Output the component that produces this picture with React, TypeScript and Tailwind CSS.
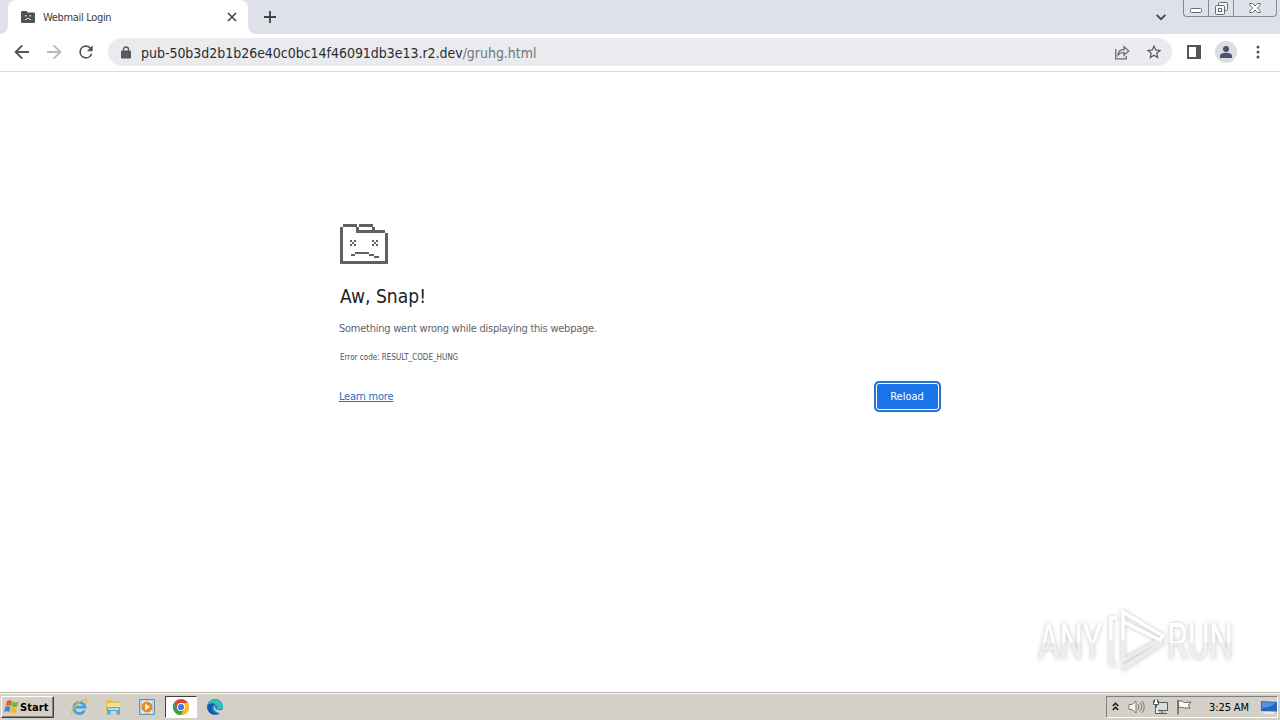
import React from 'react';

function SadFolder() {
  return (
    <svg width="48" height="40" viewBox="0 0 48 40" shapeRendering="crispEdges" fill="#5f6063">
      <path d="M3 0h14v3H3zM19 0h14v3H19zM0 3h3v37H0zM16 3h3v3h-3zM32 3h3v3h-3zM16 6h29v3H16zM45 9h3v31h-3zM3 37h42v3H3z" />
      <path d="M10 16h2v2h-2zM14 16h2v2h-2zM12 18h2v2h-2zM10 20h2v2h-2zM14 20h2v2h-2zM32 16h2v2h-2zM36 16h2v2h-2zM34 18h2v2h-2zM32 20h2v2h-2zM36 20h2v2h-2z" />
      <path d="M11 30h4v2h-4zM15 28h14v2H15zM29 30h5v2h-5zM34 32h5v2h-5z" />
    </svg>
  );
}

function TabStrip() {
  return (
    <div className="flex h-[34px] bg-[#dee1e8]">
      <div className="h-full w-2 bg-white">
        <div className="h-full rounded-br-lg bg-[#dee1e8]" />
      </div>
      <div className="flex w-[240px] items-center rounded-t-lg bg-white pl-[13px] pr-[11px]">
        <svg width="14" height="12" viewBox="0 0 14 12" className="shrink-0">
          <path d="M1 0h4.5L7 1.5h6q1 0 1 1V11q0 1-1 1H1q-1 0-1-1V1q0-1 1-1z" fill="#505458" />
          <path d="M4 4h1.5v1.5H4zM8.500 4H10v1.500H8.500zM4 9V8h1.500V7h3v1H10v1H8.500V8h-3v1z" fill="#e3e4e5" />
        </svg>
        <span className="ml-[8px] mt-px whitespace-nowrap text-[11px] leading-[14px] tracking-[-0.33px] text-[#3c4043]">Webmail Login</span>
        <svg width="10" height="10" viewBox="0 0 10 10" className="ml-auto shrink-0" stroke="#45484c" strokeWidth="1.700">
          <path d="M1 1l8 8M9 1L1 9" />
        </svg>
      </div>
      <div className="h-full w-2 bg-white">
        <div className="h-full rounded-bl-lg bg-[#dee1e8]" />
      </div>
      <svg width="12" height="12" viewBox="0 0 12 12" className="ml-2 mt-[11px]" stroke="#3f4246" strokeWidth="1.800">
        <path d="M6 0v12M0 6h12" />
      </svg>
      <svg width="10" height="7" viewBox="0 0 10 7" className="ml-auto mr-[17px] mt-[14px]" fill="none" stroke="#45484d" strokeWidth="1.800">
        <path d="M.6 .8L5 5.200 9.400 .8" />
      </svg>
      <div className="mr-[3px] flex h-[17px] w-[94px] rounded-b border border-t-0 border-[#858a95] bg-[#dfe2e8] text-[#666b77]">
        <div className="flex w-[25px] justify-center border-r border-[#858a95] pt-[8px]">
          <svg width="12" height="5" viewBox="0 0 12 5">
            <rect x=".5" y=".5" width="11" height="4" rx="1" fill="#fff" stroke="currentColor" />
          </svg>
        </div>
        <div className="flex w-[25px] justify-center border-r border-[#858a95] pt-[2px]">
          <svg width="13" height="13" viewBox="0 0 13 13" fill="#f4f5f7" stroke="currentColor">
            <rect x="3.5" y=".5" width="9" height="8" rx="1" />
            <rect x=".5" y="3.5" width="9" height="9" rx="1" />
            <rect x="3.5" y="6.5" width="3" height="3" />
          </svg>
        </div>
        <div className="flex flex-1 justify-center pt-[3px]">
          <svg width="12" height="10" viewBox="0 0 12 10" fill="#fff" stroke="currentColor">
            <path d="M.7.5h3L6 3 8.300.5h3v1.500L8.300 5l3 3v1.500h-3L6 7 3.700 9.500h-3V8l3-3-3-3z" />
          </svg>
        </div>
      </div>
    </div>
  );
}

function Toolbar() {
  return (
    <div className="flex h-[38px] items-center border-b border-[#dadce0] bg-white pb-px">
      <svg width="16" height="16" viewBox="0 0 16 16" className="ml-[14px]" fill="none" stroke="#53565a" strokeWidth="1.900">
        <path d="M15 8H2M8.300 1.300L1.600 8l6.700 6.700" />
      </svg>
      <svg width="16" height="16" viewBox="0 0 16 16" className="ml-4" fill="none" stroke="#b7b9bc" strokeWidth="1.900">
        <path d="M1 8h13M7.700 1.300L14.400 8l-6.700 6.700" />
      </svg>
      <svg width="20" height="20" viewBox="0 0 24 24" className="ml-[14px]" fill="#505357">
        <path d="M17.650 6.350A7.960 7.960 0 0 0 12 4a8 8 0 1 0 7.730 10h-2.080A6 6 0 1 1 12 6c1.660 0 3.140.69 4.220 1.780L13 11h7V4z" />
      </svg>
      <div className="ml-3 flex h-7 w-[1064px] items-center rounded-full bg-[#e9ebee] pl-[13px] pr-[9px]">
        <svg width="10" height="13" viewBox="0 0 10 13" className="shrink-0">
          <path d="M2.500 5V3.500a2.500 2.500 0 0 1 5 0V5" fill="none" stroke="#56595d" strokeWidth="1.400" />
          <rect y="4.500" width="10" height="8" rx="1" fill="#56595d" />
        </svg>
        <div className="ml-[10px] mt-px whitespace-nowrap text-[14px] leading-5 tracking-[-0.03px] text-[#2b2e31]">
          pub-50b3d2b1b26e40c0bc14f46091db3e13.r2.dev<span className="text-[#73777b]">/gruhg.html</span>
        </div>
        <svg width="16" height="15" viewBox="0 0 16 15" className="ml-auto shrink-0" fill="none" stroke="#696d72" strokeWidth="1.300">
          <path d="M1.700 4v9.800h10.600V11" />
          <path d="M4 10c.3-3.700 2.300-5.500 6-5.500V1.700l4.700 4.300L10 10.200V7.300C7.400 7.300 5.500 8.200 4 10z" />
        </svg>
        <svg width="18" height="18" viewBox="0 0 24 24" className="ml-[15px] shrink-0" fill="#555a60">
          <path d="M22 9.240l-7.190-.62L12 2 9.190 8.630 2 9.240l5.460 4.730L5.820 21 12 17.270 18.180 21l-1.630-7.030zM12 15.400l-3.760 2.270 1-4.280-3.320-2.880 4.380-.38L12 6.100l1.710 4.040 4.380.38-3.320 2.880 1 4.280z" />
        </svg>
      </div>
      <svg width="14" height="14" viewBox="0 0 14 14" className="ml-[15px]">
        <path d="M1 1h12v12H1z" fill="#fff" stroke="#515458" strokeWidth="2" />
        <path d="M9 0h5v14H9z" fill="#515458" />
      </svg>
      <div className="ml-[14px] flex h-[22px] w-[22px] items-center justify-center rounded-full bg-[#dadde2]">
        <svg width="12" height="12" viewBox="0 0 12 12" fill="#4a526b">
          <circle cx="6" cy="3" r="3" />
          <path d="M0 12v-2c0-2 3-3.200 6-3.200S12 8 12 10v2z" />
        </svg>
      </div>
      <svg width="4" height="14" viewBox="0 0 4 14" className="ml-[19px]" fill="#505357">
        <circle cx="2" cy="2" r="1.500" />
        <circle cx="2" cy="7" r="1.500" />
        <circle cx="2" cy="12" r="1.500" />
      </svg>
    </div>
  );
}

function Watermark() {
  return (
    <div className="absolute bottom-[18px] right-[36px] drop-shadow-[0_0_2px_rgba(0,0,0,0.24)]">
      <svg width="208" height="66" viewBox="0 0 208 66">
        <defs>
          <linearGradient id="fade" x1="0" y1="0" x2="0" y2="1">
            <stop offset="0.5" stopColor="#ffffff" />
            <stop offset="0.52" stopColor="#efefef" />
          </linearGradient>
        </defs>
        <g fill="url(#fade)" fontFamily="Roboto" fontSize="50">
          <text transform="translate(2 51) scale(.66 1)">ANY</text>
          <text transform="translate(131 51) scale(.67 1)">RUN</text>
        </g>
        <g fill="none" strokeWidth="3.500">
          <path d="M86 61l41-27" stroke="#ebebeb" strokeWidth="5" />
          <path d="M88 52l35-20" stroke="#ebebeb" />
          <path d="M75 32v25h5M87 32v22" stroke="#efefef" />
          <path d="M81 10h-6v22M87 32V4l40 24-3 4L88 14" stroke="#fff" />
        </g>
      </svg>
    </div>
  );
}

function ErrorPage() {
  return (
    <main className="relative flex-1 bg-white pt-[152px]">
      <div className="mx-auto w-[600px]">
        <SadFolder />
        <h1 className="mt-[20px] text-[19px] leading-6 tracking-[0.05px] text-[#202124]">Aw, Snap!</h1>
        <p className="-ml-px mt-[13px] text-[11px] leading-[15px] tracking-[-0.24px] text-[#5f6368]">Something went wrong while displaying this webpage.</p>
        <p className="mt-[16px] text-[8px] leading-[11px] text-[#505357]">Error code: RESULT_CODE_HUNG</p>
        <div className="mt-[20px] flex items-center justify-between">
          <a className="-ml-px -mt-px text-[11px] leading-[15px] tracking-[-0.2px] text-[#256fc5] underline">Learn more</a>
          <button className="mr-px h-[27px] w-[63px] rounded-[3px] border border-white bg-[#1a73e8] pr-px text-[11px] leading-[14px] text-white ring-2 ring-[#2b70ca]">Reload</button>
        </div>
      </div>
      <Watermark />
    </main>
  );
}

function Taskbar() {
  return (
    <footer className="flex h-[28px] shrink-0 items-center border-t border-[#b9b5ab] bg-[#d4d0c8] pt-px shadow-[inset_0_1px_0_#fff]">
      <div className="ml-px flex h-[22px] w-[53px] items-center border border-b-[#404040] border-l-white border-r-[#404040] border-t-white pl-[2px] shadow-[inset_-1px_-1px_0_#808080]">
        <svg width="16" height="16" viewBox="0 0 16 16" className="shrink-0">
          <path d="M3 2q3-1.500 5 .2L6.800 7Q4.500 5.600 1.700 6.800z" fill="#e75b22" />
          <path d="M8.700 2.600q3 1.700 6 .1L13.200 7.500q-3 1.400-5.700-.1z" fill="#75b63c" />
          <path d="M1.400 7.800q3-1.300 5 .2L5.200 13Q3 11.500 0 12.800z" fill="#3f84cc" />
          <path d="M7.200 8.500q3 1.500 5.800 0L11.500 13.500q-3 1.300-5.600-.2z" fill="#f5b91c" />
        </svg>
        <span className="mt-px text-[11px] font-bold leading-[14px] tracking-[0.1px] text-black">Start</span>
      </div>
      <svg width="18" height="18" viewBox="0 0 18 18" className="ml-[16px] shrink-0" fill="none">
        <path d="M14.500 12.500A5.600 5.600 0 1 1 15 9.200H5" stroke="#3ba4df" strokeWidth="2.800" />
        <path d="M2 16C0 12 10 1 15.500 1.500c1.500.2 1.500 2 .5 4" stroke="#e7b93c" strokeWidth="1.400" />
      </svg>
      <svg width="16" height="16" viewBox="0 0 16 16" className="ml-[17px] shrink-0">
        <path d="M1 1h5l1 1.500h7V12H1z" fill="#dfbd58" />
        <path d="M2 4h13v7H2z" fill="#f4df90" />
        <path d="M2 8h13v7.500h-3.500V12h-6v3.500H2z" fill="#58a9cf" />
        <path d="M3 9h11v2H3z" fill="#a9def0" />
      </svg>
      <svg width="16" height="16" viewBox="0 0 16 16" className="ml-[18px] shrink-0">
        <path d="M.5.500h15v15H.5z" fill="#b4d5eb" stroke="#5e91b8" />
        <path d="M3 2h10v12H3z" fill="#e4f0f7" />
        <circle cx="8" cy="8" r="5.500" fill="#f28618" />
        <path d="M6.200 4.800v6.400L11 8z" fill="#fff" />
      </svg>
      <div className="ml-[10px] flex h-[22px] w-[32px] items-center justify-center border border-b-white border-l-[#404040] border-r-white border-t-[#404040] bg-white">
        <svg width="16" height="16" viewBox="0 0 16 16">
          <circle cx="8" cy="8" r="8" fill="#e24435" />
          <path d="M1.070 4A8 8 0 0 0 8 16l3.460-6H4.540z" fill="#34a350" />
          <path d="M8 16a8 8 0 0 0 6.930-12H8l3.460 6z" fill="#fbc116" />
          <circle cx="8" cy="8" r="4" fill="#fff" />
          <circle cx="8" cy="8" r="3.100" fill="#397de9" />
        </svg>
      </div>
      <svg width="16" height="16" viewBox="0 0 16 16" className="ml-[10px] shrink-0">
        <circle cx="8" cy="8" r="8" fill="#168bd0" />
        <path d="M1 5C3 0 12-2 15.500 5c1.500 4-1.500 6-5 5C11 5 6 3 1 5z" fill="#35bfb3" />
        <path d="M8 5.500c-5 1-4 8 3 9.500C5 17 0 13 .2 7 2 4 6 4 8 5.500z" fill="#1459a5" />
        <path d="M8 7c-1 3 2 5 7 4l1-.5 1 3-3 .5c-4 0-8-3-7-6 0-1 0-1 1-1z" fill="#d4d0c8" />
      </svg>
      <div className="ml-auto mr-[2px] flex h-[22px] w-[172px] items-center border border-b-white border-l-[#808080] border-r-white border-t-[#808080] pl-[5px]">
        <svg width="7" height="9" viewBox="0 0 7 9" className="mb-[2px] shrink-0" fill="none" stroke="#111" strokeWidth="1.400">
          <path d="M.8 4L3.500 1.300 6.200 4M.8 8L3.500 5.300 6.200 8" />
        </svg>
        <svg width="17" height="16" viewBox="0 0 17 16" className="ml-[9px] shrink-0" fill="none" stroke="#777a7c">
          <path d="M1 5.500h3L8 2v12l-4-3.500H1z" fill="#f4f4f2" />
          <path d="M10 5q2 3 0 6M12 3.500q3.500 4.500 0 9M14 2q4.500 6 0 12" />
        </svg>
        <svg width="16" height="16" viewBox="0 0 16 16" className="ml-[7px] shrink-0" stroke="#55585a">
          <path d="M4.500 3.500h11v8h-11z" fill="#d7dcdd" />
          <path d="M10 12v2M7 14.500h8" fill="none" />
          <path d="M1.500 1.500v4h5v-4M2.500 .5v3M5.500 .5v3M3.500 6v8.500H7" fill="#fff" />
        </svg>
        <svg width="16" height="16" viewBox="0 0 16 16" className="ml-[8px] shrink-0" stroke="#626466" fill="#f8f8f7">
          <path d="M2.500 2.500c4-2 5 1.500 7 1l5.500-.5-2.500 3L14 9H8.500C7 9 5 7.500 2.500 9z" />
          <path d="M2 1v14.500" strokeWidth="1.500" />
        </svg>
        <span className="ml-[17px] mt-px whitespace-nowrap text-[11px] leading-[14px] tracking-[-0.1px] text-black">3:25 AM</span>
        <svg width="16" height="14" viewBox="0 0 16 14" className="ml-auto shrink-0">
          <path d="M0 1l16 1v9.500L0 11z" fill="#2766bd" />
          <path d="M1 2l14 1-7 4-7 1z" fill="#4e97df" />
          <path d="M2 12.500l10-.5 2 1.500H2z" fill="#f5f6f6" />
        </svg>
      </div>
    </footer>
  );
}

export default function App() {
  return (
    <div className="flex h-[720px] w-[1280px] flex-col overflow-hidden bg-white font-['DejaVu_Sans_Condensed','DejaVu_Sans',sans-serif]">
      <TabStrip />
      <Toolbar />
      <ErrorPage />
      <Taskbar />
    </div>
  );
}
